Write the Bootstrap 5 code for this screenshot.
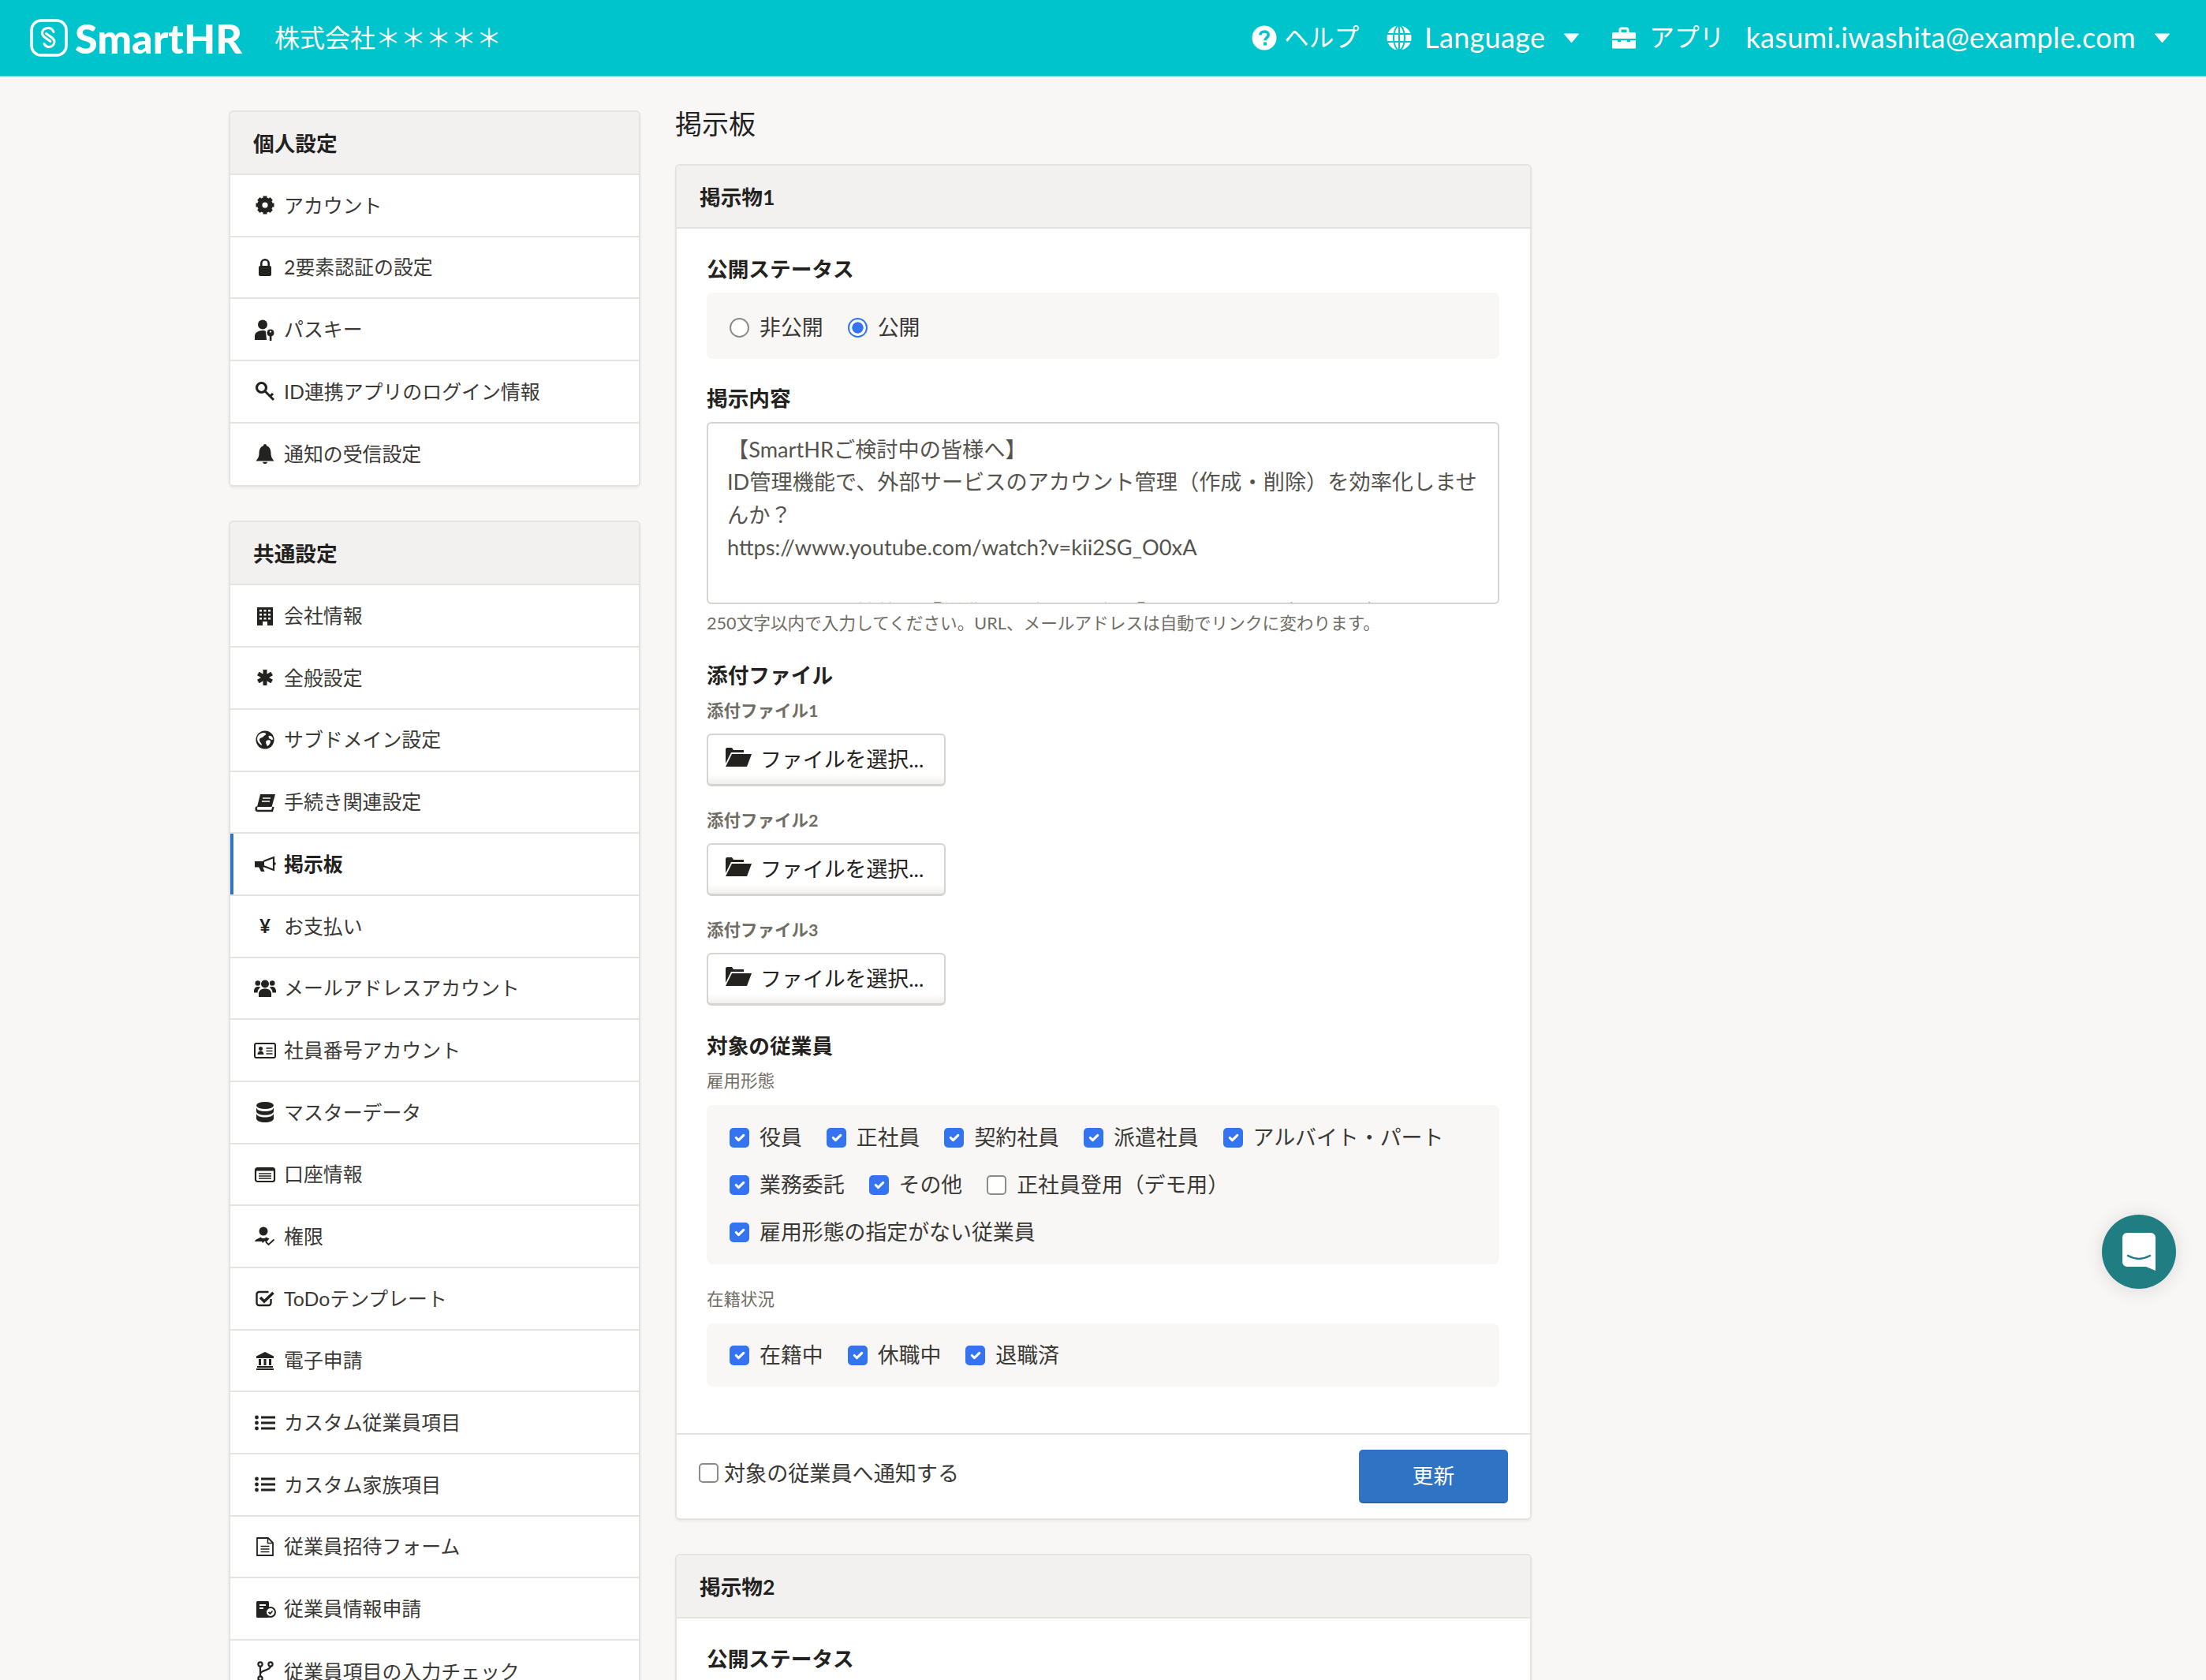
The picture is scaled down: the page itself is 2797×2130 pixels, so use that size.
<!DOCTYPE html>
<html lang="ja">
  <head>
    <meta charset="UTF-8" />
    <title>掲示板 - SmartHR</title>
    <link href="https://cdn.jsdelivr.net/npm/bootstrap@5.3.0/dist/css/bootstrap.min.css" rel="stylesheet" />
    <style>
      html, body { height: 100%; overflow: hidden; }
      body {
        background: #f8f7f6;
        color: #23221e;
        font-family: "Lato", "Noto Sans CJK JP", sans-serif;
        font-size: 26.7px;
        line-height: 1.5;
      }
      /* ヘッダー */
      .sh-top { height: 97px; background: #00c4cc; border-bottom: 1px solid #4dd6db; color: #fff; padding: 0 45px 0 38px; flex-wrap: nowrap; justify-content: flex-start; font-size: 31.7px; }
      .sh-logo-mark { width: 48px; height: 48px; margin-right: 9px; }
      .sh-logo { font-weight: 900; font-size: 52px; line-height: 1; margin-right: 41px; }
      .sh-company { white-space: nowrap; font-size: 32px; }
      .sh-hitem { display: flex; align-items: center; white-space: nowrap; }
      .sh-hitem svg { flex: none; }
      .sh-latin { font-size: 36px; letter-spacing: .33px; margin-top: -2px; }
      .sh-hicon { width: 32px; height: 32px; margin-right: 9px; }
      .sh-caret { width: 21px; height: 13px; margin-left: 23px; }
      .sh-m1 { margin-left: 35px; }
      .sh-m2 { margin-left: 40px; }
      .sh-m3 { margin-left: 27px; }
      /* レイアウト */
      .sh-page { padding-left: 290px; gap: 44px; }
      .sh-side { width: 522px; flex: none; padding-top: 43px; }
      .sh-main { width: 1086px; flex: none; padding-top: 36px; }
      .sh-title { font-size: 34px; font-weight: 400; line-height: 48px; margin-bottom: 27px; }
      /* カード */
      .sh-panel { border: 2px solid #e4e3e0; border-radius: 6px; box-shadow: 0 2px 3px rgba(0, 0, 0, .06); --bs-card-inner-border-radius: 4px; overflow: hidden; }
      .sh-panel .card-header { background: #f2f1f0; border-bottom: 2px solid #e4e3e0; font-weight: 700; padding: 2px 29px 0; display: flex; align-items: center; height: 80px; }
      .sh-mb { margin-bottom: 43px; }
      .sh-link { display: flex; align-items: center; height: 78.7px; padding: 0 0 0 30px; font-size: 24.9px; color: #3a3935; border: 0; border-bottom: 2px solid #e4e3e0; background: #fff; text-decoration: none; }
      .sh-link:last-child { border-bottom: 0; }
      .sh-link.sh-on { font-weight: 700; color: #23221e; box-shadow: inset 4px 0 0 #2f74c4; }
      .sh-ic { width: 28px; height: 28px; flex: none; margin-right: 10px; color: #23221e; }
      .sh-yen { width: 28px; flex: none; margin-right: 10px; text-align: center; font-weight: 700; color: #23221e; font-size: 24px; }
      /* フォーム */
      .sh-body { padding: 31px 39px 59px 38px; }
      .sh-h { font-weight: 700; line-height: 40px; margin: 0 0 10px; }
      .sh-mt { margin-top: 30px; }
      .sh-box { background: #f8f7f6; border-radius: 8px; padding: 11px 29px 11px; column-gap: 31px; }
      .sh-box-radio { padding: 14px 29px 10px; }
      .sh-box-state { padding: 10px 29px; margin-top: 6px; }
      .sh-chk { display: flex; align-items: center; height: 60px; gap: 13px; color: #3a3935; font-size: 26.9px; }
      .sh-chk .form-check-input { width: 25px; height: 25px; margin: 0; flex: none; }
      .form-check-input { border: 2px solid #8c8b88; }
      .form-check-input:checked { background-color: #3574f0; border-color: #3574f0; }
      .form-check-input[type=checkbox] { border-radius: 5px; }
      .form-check-input[type=radio]:checked { background: radial-gradient(circle, #3574f0 0 46%, #fff 50%); }
      .sh-area { height: 231px; padding: 12px 22px 10px 24px; border: 2px solid #d6d3d0; border-radius: 6px; font-size: 27.2px; line-height: 41.4px; color: #55534e; overflow: hidden; resize: none; font-family: inherit; }
      .sh-hint { color: #706d65; font-size: 21.65px; line-height: 33px; margin-top: 8px; }
      .sh-sub { color: #706d65; font-size: 21.5px; line-height: 33px; margin: 0 0 12px; font-weight: 700; }
      .sh-sub.sh-thin { font-weight: 400; margin-bottom: 14px; }
      .sh-fileh { margin-top: 29px; margin-bottom: 9px; }
      .sh-targeth { margin-top: 31px; margin-bottom: 8px; }
      .sh-filebtn { display: flex; align-items: center; width: 303px; height: 67px; padding: 0 0 0 21px; background: linear-gradient(#fff 80%, #f1f0ee); border: 2px solid #d6d3d0; border-bottom-width: 3px; border-radius: 6px; color: #23221e; font-size: 26.9px; margin-bottom: 27px; }
      .sh-folder { width: 34px; height: 26px; margin-right: 11px; margin-top: -6px; }
      .sh-foot { background: #fff; border-top: 2px solid #e4e3e0; height: 108px; padding: 0 28px; }
      .sh-update { width: 189px; height: 68px; background: #2f74c4; border: 0; border-bottom: 2px solid #2562a8; border-radius: 5px; color: #fff; font-size: 26.7px; }
      .sh-notify { gap: 7px; color: #3a3935; margin-top: -8px; font-size: 27.1px; }
      .sh-notify .form-check-input { width: 25px; height: 25px; margin: 0; }
      /* チャット */
      .sh-chat { position: fixed; left: 2665px; top: 1540px; width: 94px; height: 94px; border-radius: 50%; background: #207d82; box-shadow: 0 2px 24px rgba(0, 0, 0, .12); }
    </style>
  </head>
  <body>
    <svg width="0" height="0" class="position-absolute">
      <symbol id="i-gear" viewBox="0 0 28 28"><circle cx="14" cy="14" r="7" fill="none" stroke="currentColor" stroke-width="5.5"/><g fill="currentColor"><rect x="11.5" y="2.5" width="5" height="23"/><rect x="11.5" y="2.5" width="5" height="23" transform="rotate(45 14 14)"/><rect x="11.5" y="2.5" width="5" height="23" transform="rotate(90 14 14)"/><rect x="11.5" y="2.5" width="5" height="23" transform="rotate(135 14 14)"/></g><circle cx="14" cy="14" r="3.6" fill="#fff"/></symbol>
      <symbol id="i-lock" viewBox="0 0 28 28"><rect x="6" y="12" width="16" height="13" rx="2" fill="currentColor"/><path d="M9.3 13V9a4.7 4.7 0 0 1 9.4 0v4" fill="none" stroke="currentColor" stroke-width="2.6"/></symbol>
      <symbol id="i-ukey" viewBox="0 0 28 28"><circle cx="11" cy="7.500" r="6" fill="currentColor"/><path d="M1 27v-5c0-4 4-7 10-7 2 0 3 .4 4 1l1 11z" fill="currentColor"/><circle cx="21" cy="18" r="5" fill="currentColor" stroke="#fff"/><rect x="19.800" y="20" width="2.600" height="8" fill="currentColor"/><circle cx="21" cy="16.600" r="1.100" fill="#fff"/></symbol>
      <symbol id="i-key" viewBox="0 0 28 28"><circle cx="9.5" cy="9.5" r="6" fill="none" stroke="currentColor" stroke-width="3.2"/><path d="M13.8 13.8L25 25M20.5 20.5l3.5-3.5" fill="none" stroke="currentColor" stroke-width="3"/></symbol>
      <symbol id="i-bell" viewBox="0 0 28 28"><path d="M14 1a2 2 0 0 0-2 2.200C8.200 4 6.500 8.300 6.500 12.500c0 5-2 7.500-4 10h23c-2-2.500-4-5-4-10 0-4.200-1.700-8.500-5.500-9.300A2 2 0 0 0 14 1zM10.800 23.700a3.300 3.300 0 0 0 6.400 0z" fill="currentColor"/></symbol>
      <symbol id="i-bldg" viewBox="0 0 28 28"><rect x="4" y="3" width="20" height="23" fill="currentColor"/><path d="M7 6h3v2.500H7zM12.500 6h3v2.500h-3zM18 6h3v2.500h-3zM7 11h3v2.500H7zM12.500 11h3v2.500h-3zM18 11h3v2.500h-3zM7 16h3v2.500H7zM12.500 16h3v2.500h-3zM18 16h3v2.500h-3zM11 21h6v5h-6z" fill="#fff"/></symbol>
      <symbol id="i-ast" viewBox="0 0 28 28"><path d="M14 4v20M5.300 9l17.400 10M22.700 9L5.300 19" stroke="currentColor" stroke-width="5" fill="none"/></symbol>
      <symbol id="i-earth" viewBox="0 0 28 28"><circle cx="14" cy="14" r="11.500" fill="currentColor"/><path d="M5 9c3-4 8-5 10-3 1 2-2 2-3 4-2 2-5 1-5 4 0 3 3 4 3 7-3-1-8-6-5-12zM19 9c2-1 5 1 5 4-1 2-2 1-3 0-2 0-3-3-2-4zM16 15c2-1 5-1 5 1s-2 5-4 6c-1-2-3-5-1-7z" fill="#fff"/></symbol>
      <symbol id="i-book" viewBox="0 0 28 28"><path d="M8 4h19l-4.500 16H4z" fill="currentColor"/><path d="M11 9h10M10 13h10" stroke="#fff" stroke-width="1.600"/><path d="M4 20c-2 1-2 5 1 5h18l1.500-5" fill="none" stroke="currentColor" stroke-width="2.400"/></symbol>
      <symbol id="i-horn" viewBox="0 0 28 28"><path d="M12 10l13-5v16l-13-5" fill="none" stroke="currentColor" stroke-width="2.200"/><path d="M1 10h12v7.500H1z" fill="currentColor"/><path d="M6 17h5l2.500 6H9z" fill="currentColor"/><circle cx="26" cy="13" r="1.800" fill="currentColor"/></symbol>
      <symbol id="i-users" viewBox="0 0 28 28"><g fill="currentColor"><circle cx="14" cy="8.500" r="5"/><circle cx="4.800" cy="7.500" r="3.300"/><circle cx="23.200" cy="7.500" r="3.300"/><path d="M6 25v-4c0-4 3-6.500 8-6.500s8 2.500 8 6.500v4z"/><path d="M0 18c0-4 2-6 5-6 1.500 0 2.500.3 3 1-2 1.500-3.500 3.500-3.500 6.500H0z"/><path d="M28 18c0-4-2-6-5-6-1.500 0-2.500.3-3 1 2 1.500 3.500 3.500 3.500 6.500H28z"/></g></symbol>
      <symbol id="i-idcard" viewBox="0 0 28 28"><rect x="1" y="5" width="26" height="18" rx="2" fill="none" stroke="currentColor" stroke-width="2"/><circle cx="8.500" cy="11.500" r="2.500" fill="currentColor"/><path d="M4.500 19c0-3 1.800-4.500 4-4.500s4 1.500 4 4.500z" fill="currentColor"/><path d="M15.500 11h8M15.500 14.500h8M15.500 18h8" stroke="currentColor" stroke-width="1.400"/></symbol>
      <symbol id="i-db" viewBox="0 0 28 28"><g fill="currentColor"><ellipse cx="14" cy="5.500" rx="11" ry="4.500"/><path d="M3 8.500c1 3 5 4.500 11 4.500s10-1.500 11-4.500V13c0 3-5 4.800-11 4.800S3 16 3 13z"/><path d="M3 16c1 3 5 4.500 11 4.500s10-1.500 11-4.500v6c0 3-5 5-11 5S3 25 3 22z"/></g></symbol>
      <symbol id="i-listalt" viewBox="0 0 28 28"><rect x="2" y="6" width="24" height="17" rx="2.500" fill="none" stroke="currentColor" stroke-width="2.200"/><rect x="2" y="6" width="24" height="3.500" fill="currentColor"/><path d="M6 13h16M6 16h16M6 19h16" stroke="currentColor" stroke-width="1.300"/></symbol>
      <symbol id="i-perm" viewBox="0 0 28 28"><circle cx="12" cy="7" r="5.500" fill="currentColor"/><path d="M1 20c.5-3 5-3.500 7.500-5.500 2 2 5 2 7 0 1.500 1 3 1.500 4 2L15.500 21l-2-1.500L11 22l-1-2z" fill="currentColor"/><path d="M15 20.500l3.500 3.500 7-6.500" fill="none" stroke="currentColor" stroke-width="1.800"/></symbol>
      <symbol id="i-check" viewBox="0 0 28 28"><path d="M21.500 15v5a3 3 0 0 1-3 3H6.500a3 3 0 0 1-3-3V9a3 3 0 0 1 3-3h12" fill="none" stroke="currentColor" stroke-width="2.400"/><path d="M8 13l5 5L24.500 7" fill="none" stroke="currentColor" stroke-width="3.600"/></symbol>
      <symbol id="i-bank" viewBox="0 0 28 28"><g fill="currentColor"><path d="M14 3L3 8.500V11h22V8.500z"/><rect x="6" y="12" width="3" height="8"/><rect x="12.500" y="12" width="3" height="8"/><rect x="19" y="12" width="3" height="8"/><rect x="4" y="21" width="20" height="2"/><rect x="3" y="24" width="22" height="2"/></g></symbol>
      <symbol id="i-listul" viewBox="0 0 28 28"><g fill="currentColor"><circle cx="3.500" cy="7" r="2.400"/><circle cx="3.500" cy="14" r="2.400"/><circle cx="3.500" cy="21" r="2.400"/><rect x="9" y="5.500" width="18" height="3"/><rect x="9" y="12.500" width="18" height="3"/><rect x="9" y="19.500" width="18" height="3"/></g></symbol>
      <symbol id="i-file" viewBox="0 0 28 28"><path d="M4 3h14l6 6v16H4z" fill="none" stroke="currentColor" stroke-width="1.800" stroke-linejoin="round"/><path d="M17.500 3v6.500H24M8.500 13.500h11M8.500 17h11M8.500 20.500h11" fill="none" stroke="currentColor" stroke-width="1.500"/></symbol>
      <symbol id="i-doccheck" viewBox="0 0 28 28"><rect x="3" y="4" width="16" height="21" rx="1.500" fill="currentColor"/><path d="M7 9h8M7 13h5" stroke="#fff" stroke-width="2"/><circle cx="21" cy="18" r="6" fill="#fff" stroke="currentColor" stroke-width="2"/><path d="M18.500 18l2 2 3-3.500" fill="none" stroke="currentColor" stroke-width="1.800"/></symbol>
      <symbol id="i-fork" viewBox="0 0 28 28"><g fill="none" stroke="currentColor" stroke-width="2.200"><circle cx="8" cy="5" r="2.600"/><circle cx="21" cy="5" r="2.600"/><circle cx="8" cy="23" r="2.600"/><path d="M8 7.600v12.800M21 7.600c0 6-13 4-13 10"/></g></symbol>
      <symbol id="i-folder" viewBox="0 0 34 26"><path d="M1 3a2 2 0 0 1 2-2h6l2 3h13v3H8L1 21z" fill="currentColor"/><path d="M9 9h25l-6 16H1z" fill="currentColor"/></symbol>
    </svg>

    <nav class="navbar sh-top align-items-center">
      <svg class="sh-logo-mark" viewBox="0 0 48 48"><rect x="2" y="2" width="44" height="44" rx="12" fill="none" stroke="#fff" stroke-width="3.500"/><path d="M30 16.500C28.500 13 26 11.500 23 11.500c-4.500 0-7.500 3-7.500 6.500 0 2.500 1.500 4 3.500 5.500l7 5M18 31.500c1.500 3 3.500 4 5.500 4 4.500 0 7.500-3 7.500-6.500 0-2.500-1.500-4-3.500-5.500l-7-5" fill="none" stroke="#fff" stroke-width="3" stroke-linecap="round"/></svg>
      <span class="sh-logo">SmartHR</span>
      <span class="sh-company">株式会社＊＊＊＊＊</span>
      <div class="d-flex align-items-center ms-auto">
        <a class="sh-hitem text-white text-decoration-none" href="#">
          <svg class="sh-hicon" viewBox="0 0 32 32"><circle cx="16" cy="16" r="15.500" fill="#fff"/><path d="M11 12.500c0-3 2.300-4.500 5.200-4.500s5 1.700 5 4.200c0 3.600-4.200 3.600-4.200 7" fill="none" stroke="#00c4cc" stroke-width="3.600"/><rect x="15" y="21.500" width="4" height="4" fill="#00c4cc"/></svg>ヘルプ
        </a>
        <a class="sh-hitem sh-m1 text-white text-decoration-none" href="#">
          <svg class="sh-hicon me-3" viewBox="0 0 32 32"><circle cx="16" cy="16" r="15.500" fill="#fff"/><g fill="none" stroke="#00c4cc" stroke-width="2"><ellipse cx="16" cy="16" rx="7" ry="15.500"/><path d="M16 0v32M0 11h32M0 21h32"/></g></svg><span class="sh-latin">Language</span>
          <svg class="sh-caret" viewBox="0 0 21 13"><path d="M1.500 1h18L10.500 12z" fill="#fff" stroke="#fff" stroke-linejoin="round"/></svg>
        </a>
        <a class="sh-hitem sh-m2 text-white text-decoration-none" href="#">
          <svg class="sh-hicon me-3" viewBox="0 0 32 32"><path d="M11 9V6a2 2 0 0 1 2-2h6a2 2 0 0 1 2 2v3" fill="none" stroke="#fff" stroke-width="3"/><path d="M3 9h26a2 2 0 0 1 2 2v6H1v-6a2 2 0 0 1 2-2zM1 19h7v2h4v-2h8v2h4v-2h7v9a1.500 1.500 0 0 1-1.500 1.500h-27A1.500 1.500 0 0 1 1 28z" fill="#fff"/></svg>アプリ
        </a>
        <a class="sh-hitem sh-m3 text-white text-decoration-none" href="#">
          <span class="sh-latin">kasumi.iwashita@example.com</span>
          <svg class="sh-caret" viewBox="0 0 21 13"><path d="M1.500 1h18L10.500 12z" fill="#fff" stroke="#fff" stroke-linejoin="round"/></svg>
        </a>
      </div>
    </nav>

    <div class="d-flex sh-page">
      <aside class="sh-side">
        <div class="card sh-panel sh-mb">
          <div class="card-header">個人設定</div>
          <div class="list-group list-group-flush">
            <a class="sh-link" href="#"><svg class="sh-ic"><use href="#i-gear"/></svg>アカウント</a>
            <a class="sh-link" href="#"><svg class="sh-ic"><use href="#i-lock"/></svg>2要素認証の設定</a>
            <a class="sh-link" href="#"><svg class="sh-ic"><use href="#i-ukey"/></svg>パスキー</a>
            <a class="sh-link" href="#"><svg class="sh-ic"><use href="#i-key"/></svg>ID連携アプリのログイン情報</a>
            <a class="sh-link" href="#"><svg class="sh-ic"><use href="#i-bell"/></svg>通知の受信設定</a>
          </div>
        </div>
        <div class="card sh-panel">
          <div class="card-header">共通設定</div>
          <div class="list-group list-group-flush">
            <a class="sh-link" href="#"><svg class="sh-ic"><use href="#i-bldg"/></svg>会社情報</a>
            <a class="sh-link" href="#"><svg class="sh-ic"><use href="#i-ast"/></svg>全般設定</a>
            <a class="sh-link" href="#"><svg class="sh-ic"><use href="#i-earth"/></svg>サブドメイン設定</a>
            <a class="sh-link" href="#"><svg class="sh-ic"><use href="#i-book"/></svg>手続き関連設定</a>
            <a class="sh-link sh-on" href="#"><svg class="sh-ic"><use href="#i-horn"/></svg>掲示板</a>
            <a class="sh-link" href="#"><span class="sh-yen">¥</span>お支払い</a>
            <a class="sh-link" href="#"><svg class="sh-ic"><use href="#i-users"/></svg>メールアドレスアカウント</a>
            <a class="sh-link" href="#"><svg class="sh-ic"><use href="#i-idcard"/></svg>社員番号アカウント</a>
            <a class="sh-link" href="#"><svg class="sh-ic"><use href="#i-db"/></svg>マスターデータ</a>
            <a class="sh-link" href="#"><svg class="sh-ic"><use href="#i-listalt"/></svg>口座情報</a>
            <a class="sh-link" href="#"><svg class="sh-ic"><use href="#i-perm"/></svg>権限</a>
            <a class="sh-link" href="#"><svg class="sh-ic"><use href="#i-check"/></svg>ToDoテンプレート</a>
            <a class="sh-link" href="#"><svg class="sh-ic"><use href="#i-bank"/></svg>電子申請</a>
            <a class="sh-link" href="#"><svg class="sh-ic"><use href="#i-listul"/></svg>カスタム従業員項目</a>
            <a class="sh-link" href="#"><svg class="sh-ic"><use href="#i-listul"/></svg>カスタム家族項目</a>
            <a class="sh-link" href="#"><svg class="sh-ic"><use href="#i-file"/></svg>従業員招待フォーム</a>
            <a class="sh-link" href="#"><svg class="sh-ic"><use href="#i-doccheck"/></svg>従業員情報申請</a>
            <a class="sh-link" href="#"><svg class="sh-ic"><use href="#i-fork"/></svg>従業員項目の入力チェック</a>
          </div>
        </div>
      </aside>

      <main class="sh-main">
        <h1 class="sh-title">掲示板</h1>

        <div class="card sh-panel sh-mb">
          <div class="card-header">掲示物1</div>
          <div class="sh-body">
            <div class="sh-h">公開ステータス</div>
            <div class="sh-box sh-box-radio d-flex">
              <label class="sh-chk"><input class="form-check-input" type="radio" name="status1" />非公開</label>
              <label class="sh-chk"><input class="form-check-input" type="radio" name="status1" checked />公開</label>
            </div>

            <div class="sh-h sh-mt">掲示内容</div>
            <textarea class="form-control sh-area">【SmartHRご検討中の皆様へ】
ID管理機能で、外部サービスのアカウント管理（作成・削除）を効率化しませんか？
https://www.youtube.com/watch?v=kii2SG_O0xA

※リンクから機能の「従業員の表示一覧」「カスタムテーブル」を実現しません</textarea>
            <div class="sh-hint">250文字以内で入力してください。URL、メールアドレスは自動でリンクに変わります。</div>

            <div class="sh-h sh-fileh">添付ファイル</div>
            <div class="sh-sub">添付ファイル1</div>
            <button class="btn sh-filebtn" type="button"><svg class="sh-folder"><use href="#i-folder"/></svg>ファイルを選択...</button>
            <div class="sh-sub">添付ファイル2</div>
            <button class="btn sh-filebtn" type="button"><svg class="sh-folder"><use href="#i-folder"/></svg>ファイルを選択...</button>
            <div class="sh-sub">添付ファイル3</div>
            <button class="btn sh-filebtn" type="button"><svg class="sh-folder"><use href="#i-folder"/></svg>ファイルを選択...</button>

            <div class="sh-h sh-targeth">対象の従業員</div>
            <div class="sh-sub sh-thin">雇用形態</div>
            <div class="sh-box d-flex flex-wrap">
              <label class="sh-chk"><input class="form-check-input" type="checkbox" checked />役員</label>
              <label class="sh-chk"><input class="form-check-input" type="checkbox" checked />正社員</label>
              <label class="sh-chk"><input class="form-check-input" type="checkbox" checked />契約社員</label>
              <label class="sh-chk"><input class="form-check-input" type="checkbox" checked />派遣社員</label>
              <label class="sh-chk"><input class="form-check-input" type="checkbox" checked />アルバイト・パート</label>
              <label class="sh-chk"><input class="form-check-input" type="checkbox" checked />業務委託</label>
              <label class="sh-chk"><input class="form-check-input" type="checkbox" checked />その他</label>
              <label class="sh-chk"><input class="form-check-input" type="checkbox" />正社員登用（デモ用）</label>
              <label class="sh-chk"><input class="form-check-input" type="checkbox" checked />雇用形態の指定がない従業員</label>
            </div>

            <div class="sh-sub sh-thin mt-4 pt-1">在籍状況</div>
            <div class="sh-box sh-box-state d-flex">
              <label class="sh-chk"><input class="form-check-input" type="checkbox" checked />在籍中</label>
              <label class="sh-chk"><input class="form-check-input" type="checkbox" checked />休職中</label>
              <label class="sh-chk"><input class="form-check-input" type="checkbox" checked />退職済</label>
            </div>
          </div>
          <div class="card-footer sh-foot d-flex align-items-center justify-content-between">
            <label class="sh-notify d-flex align-items-center"><input class="form-check-input" type="checkbox" />対象の従業員へ通知する</label>
            <button class="btn sh-update" type="button">更新</button>
          </div>
        </div>

        <div class="card sh-panel">
          <div class="card-header">掲示物2</div>
          <div class="sh-body">
            <div class="sh-h">公開ステータス</div>
          </div>
        </div>
      </main>
    </div>

    <a class="sh-chat d-flex align-items-center justify-content-center" href="#" aria-label="チャット">
      <svg width="42" height="48" viewBox="0 0 42 48"><path d="M6 0h30a6 6 0 0 1 6 6v42l-12-5H6a6 6 0 0 1-6-6V6a6 6 0 0 1 6-6z" fill="#fff"/><path d="M7 29c9 5 19 5 28 0" fill="none" stroke="#207d82" stroke-width="2.500" stroke-linecap="round"/></svg>
    </a>

    <script src="https://cdn.jsdelivr.net/npm/bootstrap@5.3.0/dist/js/bootstrap.bundle.min.js"></script>
  </body>
</html>
